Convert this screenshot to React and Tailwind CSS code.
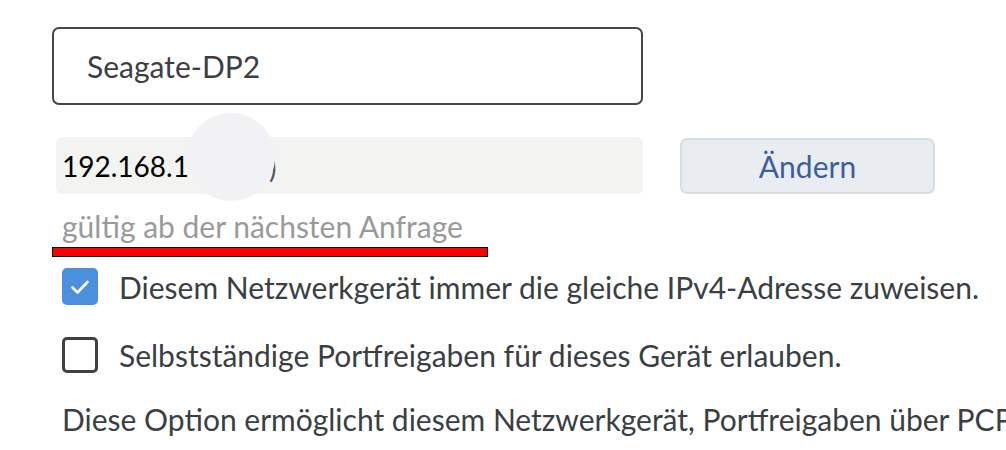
import React, { useState } from 'react';

const CheckIcon = () => (
  <svg viewBox="0 0 24 24" className="w-[24px] h-[24px]" fill="none" stroke="white" strokeWidth="2.6" strokeLinecap="round" strokeLinejoin="round">
    <path d="M4.5 12.5l5 5L19.5 7" />
  </svg>
);

const Checkbox = ({ checked, onChange, label }) => (
  <label className="flex items-center gap-[21px] cursor-pointer h-[37px]">
    <span
      onClick={onChange}
      className={
        checked
          ? 'w-[36px] h-[37px] rounded-[5px] bg-[#4a90dd] flex items-center justify-center shrink-0'
          : 'w-[36px] h-[36px] rounded-[5px] border-[3px] border-[#3d4145] bg-white shrink-0'
      }
    >
      {checked && <CheckIcon />}
    </span>
    <span className="text-[30px] leading-[36px] text-[#3a3f44] whitespace-nowrap">{label}</span>
  </label>
);

export default function App() {
  const [fixedIp, setFixedIp] = useState(true);
  const [portShare, setPortShare] = useState(false);

  return (
    <div className="w-[1006px] h-[450px] overflow-hidden bg-white pl-[52px] pt-[27px] font-['Lato','Liberation_Sans',sans-serif]">
      {/* device name */}
      <div className="w-[591px] h-[78px] border-2 border-[#44484c] rounded-[7px] flex items-center pl-[33px]">
        <span className="text-[30px] leading-[36px] text-[#3c3f42]">Seagate-DP2</span>
      </div>

      {/* ip address row */}
      <div className="flex items-center mt-[32px] h-[57px]">
        <div className="relative w-[587px] h-[57px] ml-[4px] bg-[#f3f3f1] rounded-[6px] flex items-center pl-[6px]">
          <span className="text-[28px] leading-[36px] text-black">192.168.1</span>
          <span className="absolute left-[213px] top-[12px] text-[28px] leading-[36px] text-[#555]">)</span>
          <span className="absolute left-[131px] top-[-24px] w-[88px] h-[88px] rounded-full bg-[#f2f2f4]" />
        </div>
        <button className="ml-[37px] w-[255px] h-[56px] bg-[#e9ecf0] border-2 border-[#d8dde3] rounded-[7px] text-[30px] leading-[36px] text-[#3d5e9e]">
          Ändern
        </button>
      </div>

      {/* hint */}
      <div className="ml-[10px] mt-[14px] text-[30px] leading-[36px] text-[#9a9a9a] whitespace-nowrap">gültig ab der nächsten Anfrage</div>
      <div className="mt-[3px] w-[436px] h-[10px] bg-[#ff0000] border border-black" />

      {/* options */}
      <div className="ml-[10px] mt-[11px] flex flex-col gap-[31px]">
        <Checkbox checked={fixedIp} onChange={() => setFixedIp(!fixedIp)} label="Diesem Netzwerkgerät immer die gleiche IPv4-Adresse zuweisen." />
        <Checkbox checked={portShare} onChange={() => setPortShare(!portShare)} label="Selbstständige Portfreigaben für dieses Gerät erlauben." />
      </div>

      <p className="ml-[10px] mt-[28px] text-[30px] leading-[36px] text-[#3a3f44] whitespace-nowrap">
        Diese Option ermöglicht diesem Netzwerkgerät, Portfreigaben über PCP
      </p>
    </div>
  );
}
